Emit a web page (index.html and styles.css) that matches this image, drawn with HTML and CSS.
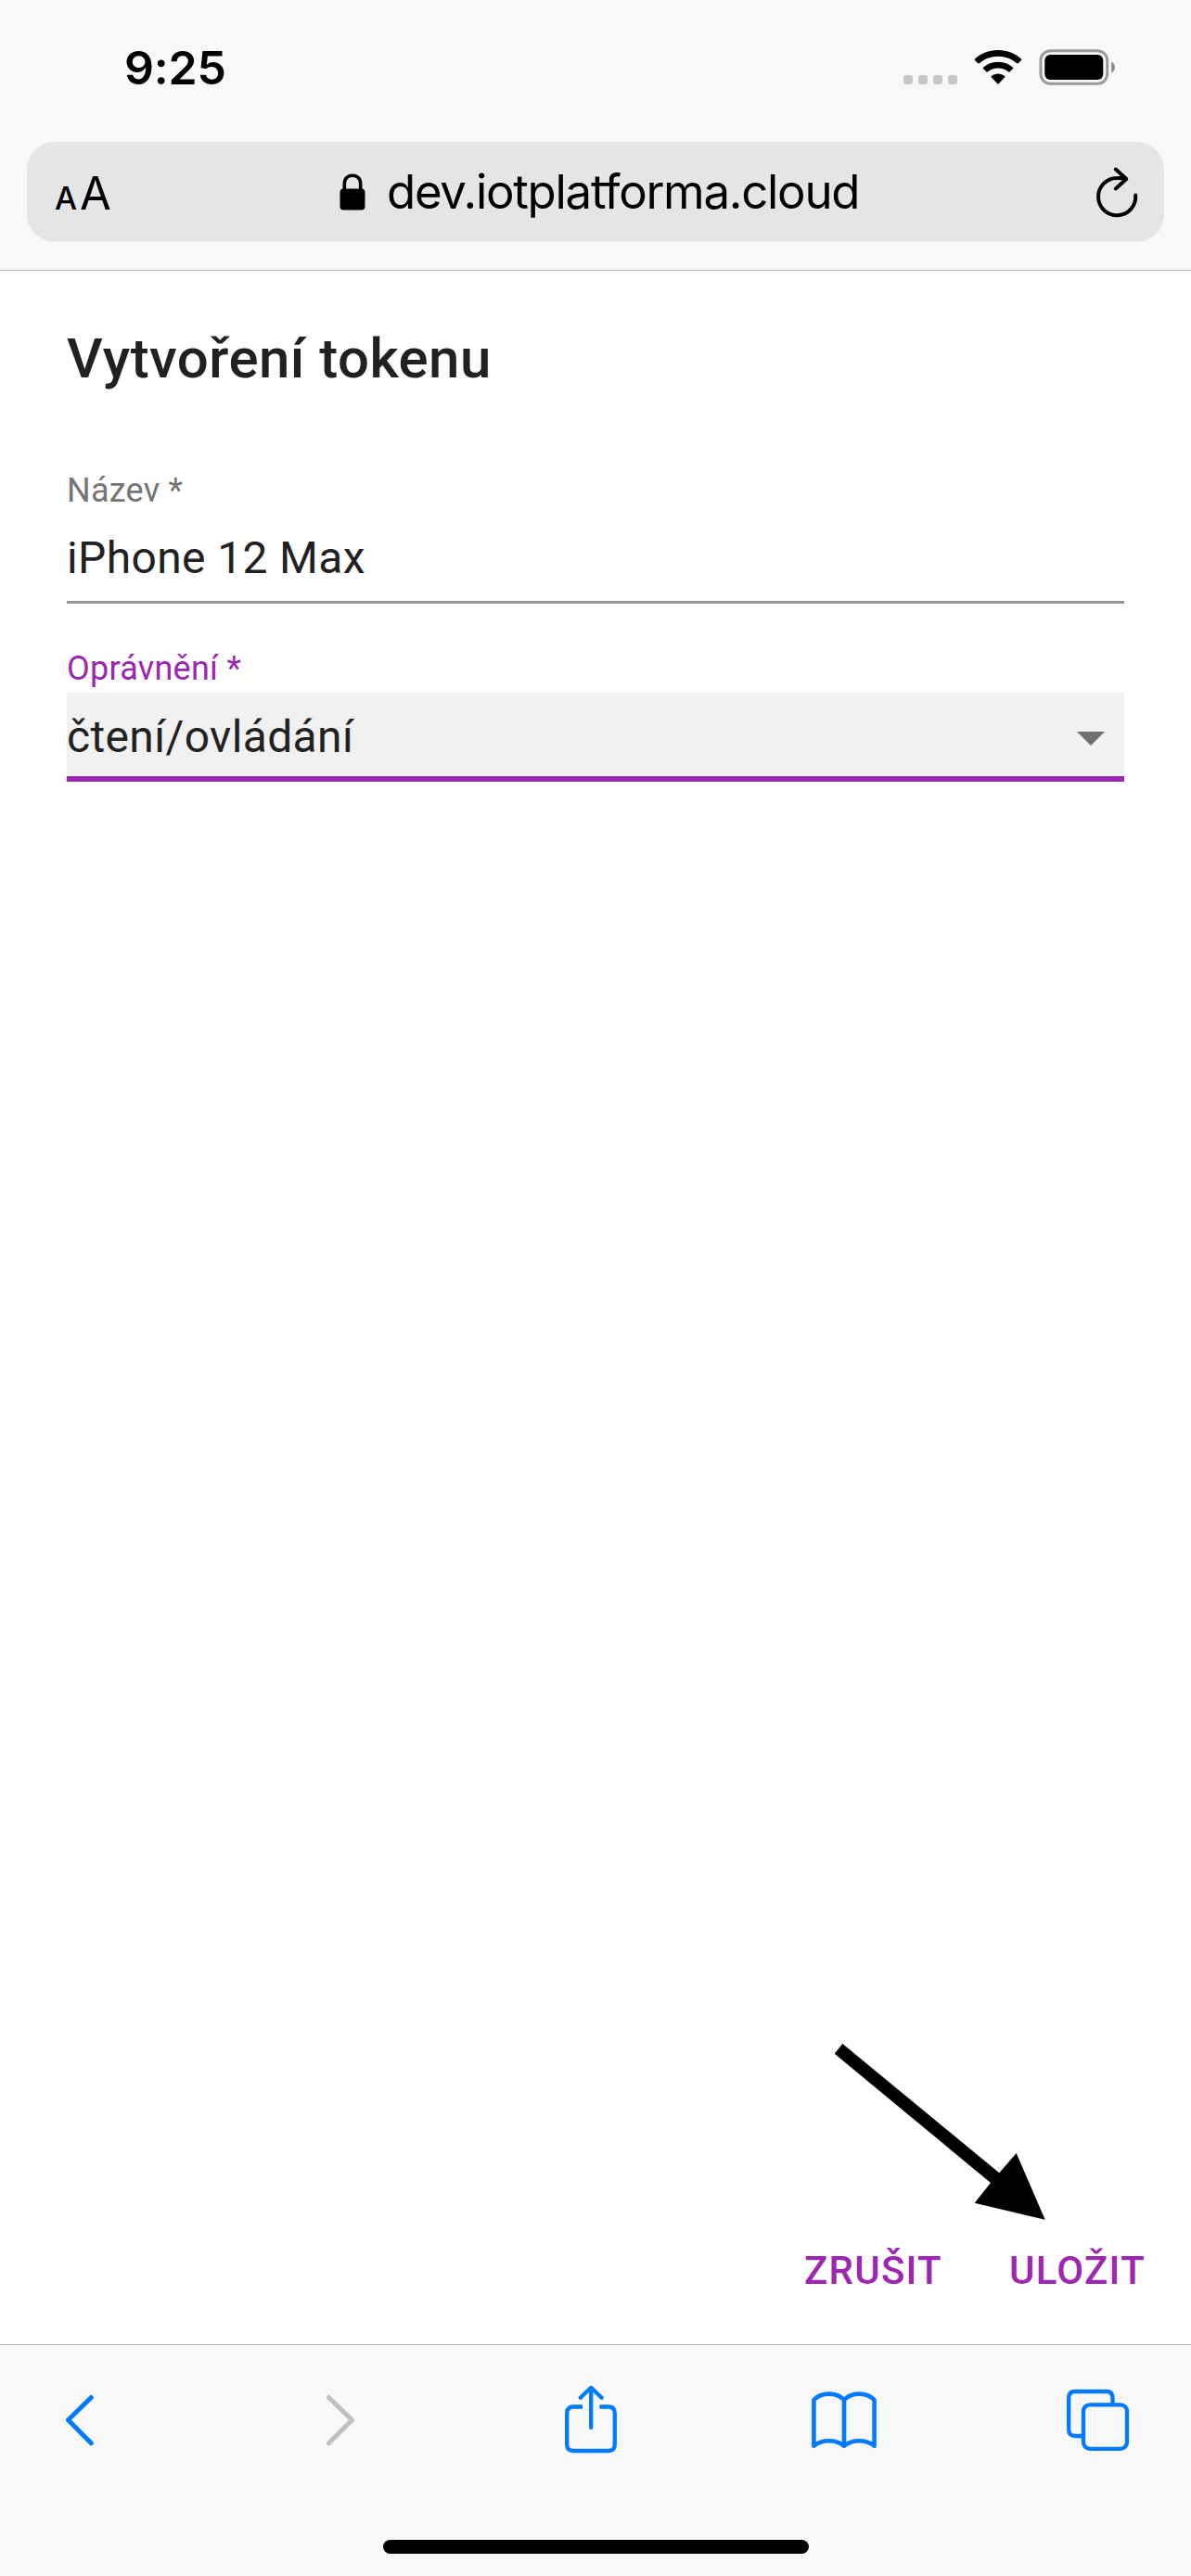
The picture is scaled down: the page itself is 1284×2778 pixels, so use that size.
FILE: index.html
```html
<!DOCTYPE html>
<html lang="cs">
<head>
<meta charset="utf-8">
<title>Vytvoření tokenu</title>
<link rel="stylesheet" href="styles.css">
</head>
<body>
<header class="browser-top">
  <div class="status-bar">
    <span class="time">9:25</span>
    <div class="indicators">
      <div class="signal"><i></i><i></i><i></i><i></i></div>
      <svg class="wifi" width="52" height="38" viewBox="0 0 52 38">
        <path d="M26 0C35.8 0 44.7 3.700 51 9.600Q51.600 10.200 51 10.900L47.600 14.300Q47 14.900 46.300 14.300C41 9.500 33.800 6.700 26 6.700S11 9.500 5.700 14.300Q5 14.900 4.400 14.300L1 10.900Q.4 10.200 1 9.600C7.300 3.700 16.200 0 26 0Z"/>
        <path d="M26 12.800C32.200 12.800 37.800 15 42 18.700Q42.600 19.300 42 20L38.500 23.500Q37.900 24.100 37.200 23.500C34.200 21 30.300 19.500 26 19.500S17.800 21 14.800 23.500Q14.100 24.100 13.500 23.500L10 20Q9.400 19.300 10 18.700C14.200 15 19.800 12.800 26 12.800Z"/>
        <path d="M26 25.500C28.700 25.500 31.200 26.500 33.100 28.100Q33.800 28.800 33.100 29.500L26.700 36.300Q26 37 25.300 36.300L18.900 29.500Q18.200 28.800 18.900 28.100C20.800 26.500 23.300 25.500 26 25.500Z"/>
      </svg>
      <svg class="battery" width="84" height="40" viewBox="0 0 84 40">
        <rect x="2" y="1.700" width="71.700" height="35.600" rx="10.500" fill="none" stroke="#999" stroke-width="3"/>
        <rect x="6.300" y="6" width="63" height="27" rx="6"/>
        <path d="M78.200 13.500Q82 15.500 82 19.500T78.200 25.500Z" fill="#8c8c8c"/>
      </svg>
    </div>
  </div>
  <div class="address-bar">
    <span class="text-size"><span class="small">A</span><span class="large">A</span></span>
    <div class="address">
      <svg width="28" height="40" viewBox="0 0 28 40">
        <path d="M5.300 19V11.500C5.300 5.500 8.800 2.200 14 2.200S22.700 5.500 22.700 11.500V19" fill="none" stroke="#000" stroke-width="3.600"/>
        <rect x=".5" y="16.500" width="27" height="23" rx="4"/>
      </svg>
      <span class="host">dev.iotplatforma.cloud</span>
    </div>
    <svg class="reload" width="46" height="56" viewBox="0 0 46 56" fill="none" stroke="#000" stroke-width="4" stroke-linecap="round" stroke-linejoin="round">
      <path d="M43.200 31.500A20.100 20.100 0 1 1 23 13Q29 12.600 33 14M21.800 3.500L33.300 14L21.800 24.500"/>
    </svg>
  </div>
</header>
<main class="dialog">
  <h1>Vytvoření tokenu</h1>
  <div class="field">
    <label>Název *</label>
    <div class="value">iPhone 12 Max</div>
  </div>
  <div class="field focused">
    <label>Oprávnění *</label>
    <div class="value"><span>čtení/ovládání</span>
      <svg width="30" height="15" viewBox="0 0 30 15"><path d="M0 0H30L15 15Z" fill="#707070"/></svg>
    </div>
  </div>
  <div class="actions"><span>ZRUŠIT</span><span>ULOŽIT</span></div>
  <svg class="pointer" width="228" height="191" viewBox="0 0 228 191"><path d="M9.300 0L178.300 139.300L196.700 118L227.700 189.700L151.700 171.700L169 150L.7 10.700Z"/></svg>
</main>
<footer class="toolbar">
  <nav>
    <svg class="back" width="32" height="56" viewBox="0 0 32 56"><path d="M3.500 27.700L28.300 3.500M3.500 27.700L28.300 52.700"/></svg>
    <svg class="forward" width="32" height="56" viewBox="0 0 32 56"><path d="M3.500 3.500L28.500 27.700L3.500 52.700"/></svg>
    <svg class="share" width="56" height="74" viewBox="0 0 56 74"><path d="M19 22.500H9Q2.200 22.500 2.200 29.500V63Q2.200 70 9 70H47Q53.800 70 53.800 63V29.500Q53.800 22.500 47 22.500H37.500" stroke-linecap="butt"/><path d="M28.200 45V1.800M16.800 12.800L28.200 1.800L39.600 12.800"/></svg>
    <svg class="book" width="70" height="62" viewBox="0 0 70 62"><path d="M35 9C27 .5 10.500 .5 2.400 9V58.700C11.500 51.500 26 51.500 35 58.700C44 51.500 58.500 51.500 67.600 58.700V9C59.500 .5 43 .5 35 9V58.700"/></svg>
    <svg class="tabs" width="68" height="68" viewBox="0 0 68 68"><path d="M18 51H9Q2.200 51 2.200 44V10Q2.200 3 9 3H43Q49.500 3 49.500 10V17" stroke-linecap="butt"/><rect x="18" y="17.300" width="47" height="47.500" rx="7"/></svg>
  </nav>
  <div class="home"></div>
</footer>
</body>
</html>
```
FILE: styles.css
```css
* { box-sizing: border-box; }
body {
  margin: 0;
  width: 1284px;
  height: 2778px;
  display: flex;
  flex-direction: column;
  background: #fff;
  color: #000;
  font-family: Roboto, sans-serif;
}
svg { display: block; flex: none; }
.browser-top {
  height: 292px;
  background: #f8f8f8;
  border-bottom: 1px solid #b2b2b2;
  font-family: Inter, sans-serif;
}
.status-bar {
  height: 153px;
  padding: 43px 80px 0 134px;
  display: flex;
  justify-content: space-between;
  align-items: flex-start;
}
.time { font-size: 50px; font-weight: 600; line-height: 60px; letter-spacing: -0.2px; }
.indicators { display: flex; padding-top: 10px; }
.signal { display: flex; gap: 6px; padding-top: 28px; margin-right: 18px; }
.signal i { width: 10px; height: 10px; border-radius: 3px; background: #c7c7c7; }
.wifi { margin: 1px 18px 0 0; }
.address-bar {
  height: 108px;
  margin: 0 29px;
  padding: 0 28px 0 30px;
  border-radius: 30px;
  background: #e5e5e5;
  display: flex;
  align-items: center;
}
.text-size { width: 307px; display: flex; align-items: baseline; gap: 3px; padding-top: 2px; }
.small { font-size: 34px; font-weight: 500; }
.large { font-size: 49px; }
.address { flex: 1; display: flex; align-items: center; gap: 23px; }
.host { font-size: 51px; line-height: 60px; letter-spacing: -1.3px; }
.dialog {
  flex: 1;
  position: relative;
  display: flex;
  flex-direction: column;
  padding: 59px 72px 0;
  color: #212121;
}
h1 { margin: 0 0 86px; font-size: 60px; font-weight: 500; line-height: 72px; letter-spacing: 0.43px; }
.field { margin-bottom: 50px; }
.field label {
  display: block;
  font-size: 36px;
  line-height: 40px;
  letter-spacing: 0.25px;
  color: #757575;
}
.field .value {
  height: 102px;
  padding: 25px 0 0;
  border-bottom: 3px solid #949494;
  font-size: 48px;
  line-height: 56px;
  letter-spacing: 0.36px;
}
.field.focused label { color: #9c27b0; }
.field.focused .value {
  display: flex;
  justify-content: space-between;
  align-items: center;
  height: 96px;
  margin-top: 6px;
  padding: 5px 21px 0 0;
  background: #f1f1f1;
  border-bottom: 6px solid #9c27b0;
}
.field.focused svg { margin-top: 4px; }
.actions {
  margin: auto -23px 55px 0;
  display: flex;
  justify-content: flex-end;
  gap: 72px;
  color: #9c27b0;
  font-size: 42px;
  font-weight: 500;
  line-height: 48px;
  letter-spacing: 1.25px;
}
/* Arrow laid over the page, pointing at the save button */
.pointer { position: absolute; left: 899px; top: 1912px; }
.toolbar {
  height: 250px;
  background: #f8f8f8;
  border-top: 1px solid #b2b2b2;
  display: flex;
  flex-direction: column;
  align-items: center;
  justify-content: space-between;
  padding-bottom: 24px;
}
nav {
  width: 100%;
  height: 162px;
  padding-left: 70px;
  display: flex;
  align-items: center;
}
nav svg {
  fill: none;
  stroke: #007aff;
  stroke-width: 4.300px;
  stroke-linecap: round;
  stroke-linejoin: round;
}
nav .back, nav .forward { stroke-width: 5px; }
nav .forward { stroke: #c0c0c0; margin-left: 249px; }
nav .share { margin-left: 226px; }
nav .book { stroke-width: 4.600px; margin-left: 210px; }
nav .tabs { margin-left: 205px; }
.home { width: 459px; height: 15px; border-radius: 8px; background: #000; }
```
